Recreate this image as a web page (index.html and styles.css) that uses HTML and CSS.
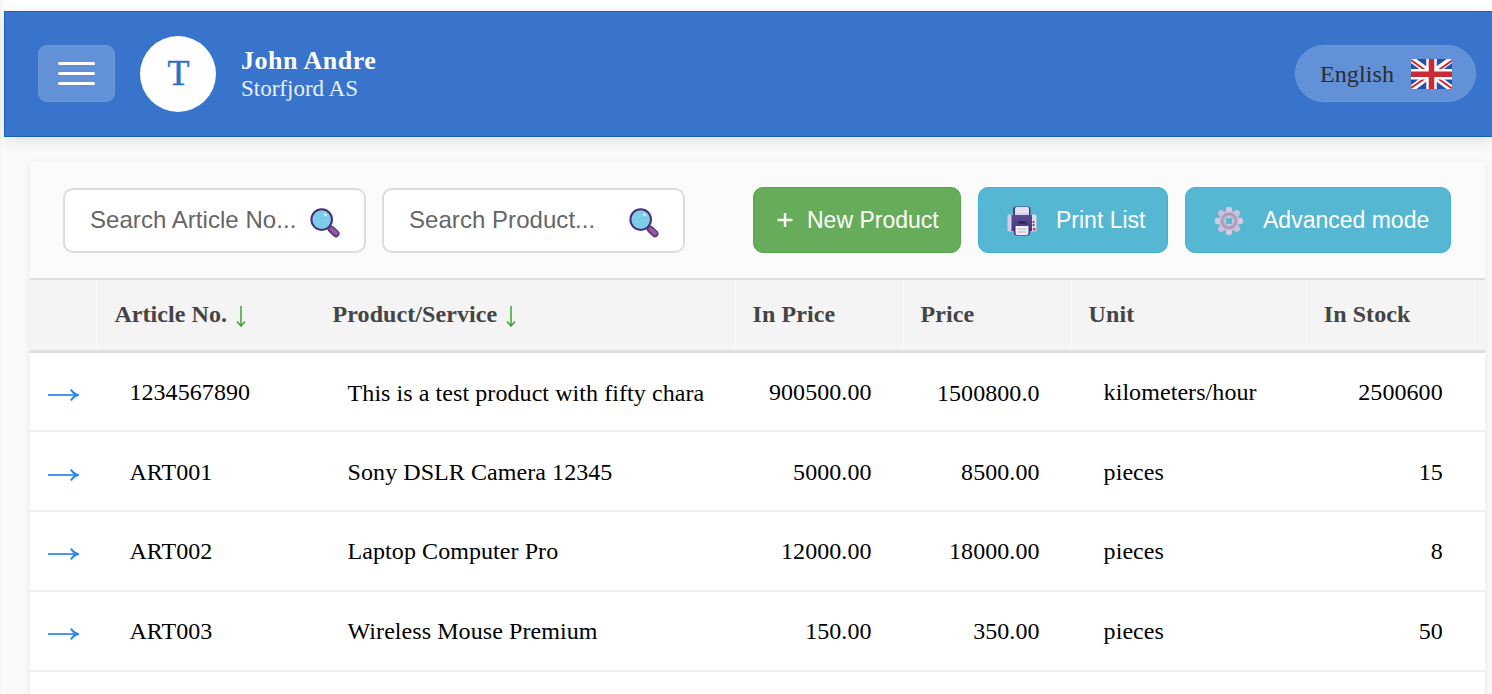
FILE: index.html
```html
<!DOCTYPE html>
<html lang="en">
<head>
<meta charset="utf-8">
<title>Products</title>
<link rel="stylesheet" href="styles.css">
</head>
<body>
<svg class="defs" width="0" height="0" aria-hidden="true">
  <defs>
    <linearGradient id="handle" x1="0" y1="0" x2="1" y2="1"><stop offset="0" stop-color="#5c3375"/><stop offset=".5" stop-color="#9560a0"/><stop offset="1" stop-color="#6b3d85"/></linearGradient>
    <linearGradient id="body" x1="0" y1="0" x2="0" y2="1"><stop offset="0" stop-color="#5a4a94"/><stop offset="1" stop-color="#45337d"/></linearGradient>
    <symbol id="lens" viewBox="0 0 30 30">
      <path d="M21.2 21.200l4.700 4.500" stroke="#63397c" stroke-width="7.200" stroke-linecap="round"/>
      <path d="M21.500 21l4.600 4.400" stroke="#935c9e" stroke-width="3.600" stroke-linecap="round"/>
      <circle cx="11.700" cy="11.600" r="10.300" fill="#7dcce9" stroke="#463079" stroke-width="2"/>
      <ellipse cx="15.500" cy="6.800" rx="2" ry="1.500" transform="rotate(35 15.500 6.800)" fill="#c5ebf8"/>
    </symbol>
    <symbol id="arrow" viewBox="0 0 31 14">
      <path d="M0 7H28" stroke="#4a97f3" stroke-width="2"/>
      <path d="M23 1.500Q25 5.500 30 7Q25 8.500 23 12.500" fill="none" stroke="#2386f0" stroke-width="2"/>
    </symbol>
  </defs>
</svg>
<div class="app">
  <header class="topbar">
    <button class="menu" aria-label="Menu"><span></span><span></span><span></span></button>
    <div class="avatar">T</div>
    <div class="user">
      <div class="name">John Andre</div>
      <div class="company">Storfjord AS</div>
    </div>
    <div class="language">
      <span>English</span>
      <svg class="flag" width="41" height="30" viewBox="0 0 41 30">
        <clipPath id="f"><rect width="41" height="30" rx="1.5"/></clipPath>
        <g clip-path="url(#f)">
          <rect width="41" height="30" fill="#2150ae"/>
          <path d="M0 0L41 30M41 0L0 30" stroke="#fff" stroke-width="6.4"/>
          <path d="M0 1L16 12.5M41 1.5L27 11.500M16 18L0 29M25 18L41 29.500" stroke="#c92a35" stroke-width="2"/>
          <path d="M20.500 0V30M0 15.300H41" stroke="#fff" stroke-width="10.500"/>
          <path d="M20.500 0V30M0 15.300H41" stroke="#c92a35" stroke-width="5.600"/>
        </g>
      </svg>
    </div>
  </header>
  <main class="card">
    <div class="toolbar">
      <div class="search"><span>Search Article No...</span><svg width="30" height="30"><use href="#lens"/></svg></div>
      <div class="search"><span>Search Product...</span><svg width="30" height="30"><use href="#lens"/></svg></div>
      <button class="btn green"><svg class="plus" width="16" height="16" viewBox="0 0 16 16"><path d="M.5 8H15.500M8 1V15" stroke="#fff" stroke-width="2.400"/></svg><span>New Product</span></button>
      <button class="btn blue print">
        <svg width="30" height="30" viewBox="0 0 30 30">
          <rect x=".5" y="8.500" width="6" height="17" rx="1.500" fill="#d8cce3"/>
          <rect x="24" y="8.500" width="5.500" height="17" rx="1.500" fill="#e2dbea"/>
          <path d="M26.500 15v6" stroke="#4a3a70" stroke-width="1.500" stroke-dasharray="2 1"/>
          <rect x="26" y="22" width="2.500" height="2.500" fill="#e13258"/>
          <path d="M6 10V3Q6 .500 8.500.500H21Q23.500.500 23.500 3V10" fill="#4b3b82"/>
          <rect x="8" y="1" width="14" height="11" rx="1.500" fill="#e4def0"/>
          <path d="M4.500 9H25V25H4.500Z" fill="url(#body)"/>
          <path d="M8 9H22V7H8Z" fill="#d7cfe5"/>
          <path d="M12 15.500h6l1.500 2h-9Z" fill="#251b4a"/>
          <path d="M7 20H23V26.500Q23 29.500 20.500 29.500H9.500Q7 29.500 7 26.500Z" fill="#3e2d73"/>
          <path d="M8.500 20H21.500V27Q21.500 29 20 29H10Q8.500 29 8.500 27Z" fill="#f3eef6"/>
          <path d="M10.500 23H19.500M10.500 26H19.500" stroke="#b7abc5"/>
        </svg><span>Print List</span></button>
      <button class="btn blue mode">
        <svg width="30" height="30" viewBox="0 0 30 30">
          <g stroke-width="6.400" stroke-linecap="round" fill="none">
            <path d="M15 4V9M15 21V26M4 15H9M21 15H26" stroke="#d6cae5"/>
            <path d="M7.200 7.200L10 10M20 20L22.800 22.800M7.200 22.800L10 20M20 10L22.800 7.200" stroke="#cebfdf"/>
          </g>
          <circle cx="15" cy="15" r="7.500" fill="none" stroke="#cfc2dc" stroke-width="5"/>
          <circle cx="15" cy="15" r="7.200" fill="none" stroke="#a99cb5" stroke-width="2.400"/>
          <circle cx="15" cy="15" r="5.500" fill="none" stroke="#b8aac5" stroke-width="1.600"/>
        </svg><span>Advanced mode</span></button>
    </div>
    <div class="row head">
      <div></div>
      <div>Article No. <svg class="sort" width="10" height="22" viewBox="0 0 10 22"><path d="M5 0V20M1 15.500L5 20L9 15.500" fill="none" stroke="#3da32c" stroke-width="1.500"/></svg></div>
      <div>Product/Service <svg class="sort" width="10" height="22" viewBox="0 0 10 22"><path d="M5 0V20M1 15.500L5 20L9 15.500" fill="none" stroke="#3da32c" stroke-width="1.500"/></svg></div>
      <div>In Price</div><div>Price</div><div>Unit</div><div>In Stock</div><div></div>
    </div>
    <div class="row">
      <div class="open"><svg width="31" height="14"><use href="#arrow"/></svg></div>
      <div>1234567890</div><div class="low">This is a test product with fifty chara</div><div class="num">900500.00</div><div class="num low">1500800.0</div><div>kilometers/hour</div><div class="num">2500600</div>
    </div>
    <div class="row">
      <div class="open"><svg width="31" height="14"><use href="#arrow"/></svg></div>
      <div>ART001</div><div>Sony DSLR Camera 12345</div><div class="num">5000.00</div><div class="num">8500.00</div><div>pieces</div><div class="num">15</div>
    </div>
    <div class="row">
      <div class="open"><svg width="31" height="14"><use href="#arrow"/></svg></div>
      <div>ART002</div><div>Laptop Computer Pro</div><div class="num">12000.00</div><div class="num">18000.00</div><div>pieces</div><div class="num">8</div>
    </div>
    <div class="row">
      <div class="open"><svg width="31" height="14"><use href="#arrow"/></svg></div>
      <div>ART003</div><div>Wireless Mouse Premium</div><div class="num">150.00</div><div class="num">350.00</div><div>pieces</div><div class="num">50</div>
    </div>
  </main>
</div>
</body>
</html>
```

FILE: styles.css
```css
* { box-sizing: border-box; }
html, body { margin: 0; height: 694px; overflow: hidden; }
body {
  padding: 10.500px 0 0 4px;
  background: linear-gradient(90deg, #f5f5f5, #fff 4px);
  font-family: "Liberation Serif", "Times New Roman", serif;
  font-size: 24px;
  color: #000;
}
.defs { display: block; height: 0; margin: 0; }
.app { height: 683.500px; background: #fafafa; }
button { border: 0; margin: 0; padding: 0; font: inherit; }

.topbar {
  display: flex;
  align-items: center;
  height: 126px;
  padding: 0 16px 0 34px;
  background: #3873cc;
  border: 1px solid #1462c0;
  border-right: 0;
  box-shadow: 0 3px 14px rgba(0, 0, 0, .11);
}
.menu {
  display: flex;
  flex-direction: column;
  align-items: center;
  justify-content: center;
  gap: 7px;
  width: 77px;
  height: 57px;
  margin-left: -1px;
  border-radius: 9px;
  background: #6291d7;
  border: 1px solid #6d99da;
}
.menu span { width: 37px; height: 3.200px; border-radius: 2px; background: #fff; }
.avatar {
  display: flex;
  align-items: center;
  justify-content: center;
  width: 76px;
  height: 76px;
  margin-left: 25px;
  padding: 0 0 2px 1px;
  border-radius: 50%;
  background: #fff;
  color: #2f6fca;
  font-size: 36px;
  -webkit-text-stroke: .5px #2f6fca;
}
.user { margin-left: 25px; color: #fff; line-height: 28px; padding-top: 2px; }
.name { font-weight: 700; font-size: 26px; letter-spacing: .5px; }
.company { font-size: 23px; color: #e9f1fc; }
.language {
  display: flex;
  align-items: center;
  gap: 17px;
  width: 181px;
  height: 57px;
  margin-left: auto;
  padding-left: 24px;
  border-radius: 29px;
  background: #6291d7;
  border: 1px solid #6d99da;
  color: #2c2c2c;
}
.language span { padding-top: 2px; letter-spacing: .1px; }

.card {
  width: 1455px;
  height: 560px;
  margin: 25.500px 0 0 26px;
  background: #fff;
  box-shadow: 0 2px 8px rgba(0, 0, 0, .08);
}
.toolbar {
  display: flex;
  align-items: center;
  height: 118px;
  padding: 0 34px 0 33px;
  background: #fbfbfb;
  border-bottom: 2px solid #dedede;
  font-family: "Liberation Sans", Arial, sans-serif;
}
.search {
  display: flex;
  align-items: center;
  justify-content: space-between;
  width: 303px;
  height: 65px;
  margin-right: 16px;
  padding: 0 24px 0 25px;
  background: #fff;
  border: 2px solid #dcdcdc;
  border-radius: 10px;
  color: #666;
}
.search svg { margin-top: 5px; }
.search span { letter-spacing: .05px; }
.btn {
  display: flex;
  align-items: center;
  height: 66px;
  border-radius: 10px;
  color: #fff;
  font-size: 23px;
}
.btn span { white-space: nowrap; }
.green { width: 208px; margin-left: 52px; padding-left: 23px; gap: 14px; background: #67ac5b; border: 1px solid #56a44c; }
.blue { background: #55b7d2; border: 1px solid #41b2d0; margin-left: 17px; }
.blue svg { margin-top: 2px; }
.print { width: 190px; padding-left: 28px; gap: 19px; }
.mode { width: 266px; padding-left: 28px; gap: 19px; }

.row {
  display: grid;
  grid-template-columns: 67.400px 218.200px 420px 168px 168px 235.200px 168px 10.200px;
  align-items: center;
  height: 79.800px;
  border-bottom: 2px solid #f0f0f0;
  letter-spacing: .07px;
}
.row > div { padding: 2px 32px 0; white-space: nowrap; }
.row > .num { text-align: right; }
.row > .low { padding-top: 4px; }
.row > .open { display: flex; padding: 7px 0 0 18px; }
.head {
  height: 72.500px;
  align-items: stretch;
  background: #f4f4f4;
  border-bottom: 3px solid #dfdfdf;
  color: #444;
  font-weight: 700;
}
.row.head > div { padding: 0 0 0 17px; line-height: 68px; border-right: 1px solid #f7f7f7; }
.row.head > div:last-child { border-right: 0; }
.sort { vertical-align: -6px; margin-left: 3px; }
```
